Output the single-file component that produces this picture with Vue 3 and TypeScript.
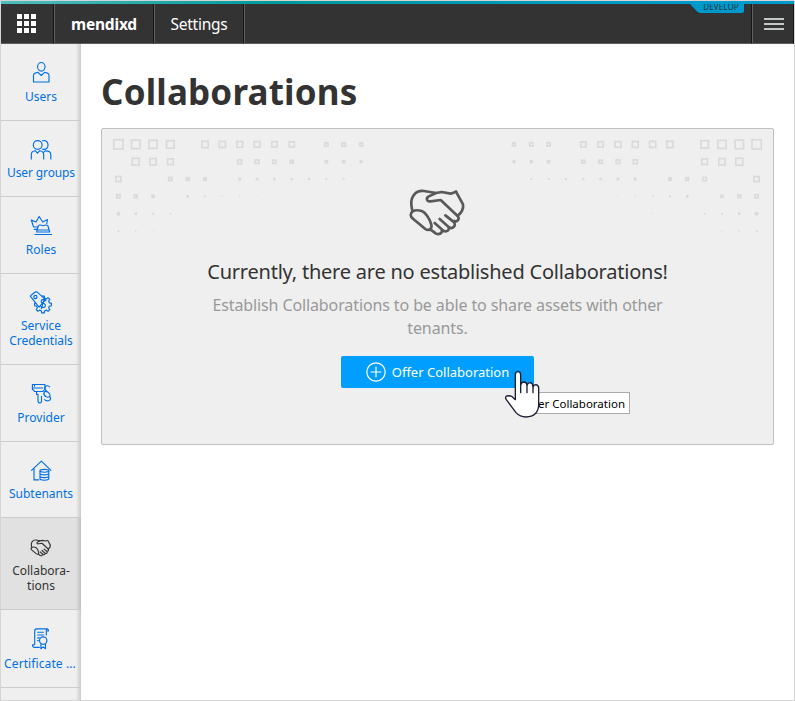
<script setup lang="ts">
interface NavItem {
  id: string
  lines: string[]
  height: number
}

const navItems: NavItem[] = [
  { id: 'users', lines: ['Users'], height: 77 },
  { id: 'groups', lines: ['User groups'], height: 76 },
  { id: 'roles', lines: ['Roles'], height: 77 },
  { id: 'credentials', lines: ['Service', 'Credentials'], height: 91 },
  { id: 'provider', lines: ['Provider'], height: 77 },
  { id: 'subtenants', lines: ['Subtenants'], height: 76 },
  { id: 'collaborations', lines: ['Collabora-', 'tions'], height: 92 },
  { id: 'certificate', lines: ['Certificate ...'], height: 78 },
]

const activeId = 'collaborations'

// Square sizes per row, keyed by column, counted from the outer edge inwards.
const patternRows: Record<number, number>[] = [
  { 0: 11, 1: 10.2, 2: 9.8, 3: 9.2, 5: 8, 6: 7.8, 7: 7.6, 8: 7.4, 9: 7, 10: 6.8, 12: 5, 13: 5, 14: 4.6 },
  { 1: 8.6, 2: 8, 3: 7.4, 7: 5.6, 8: 5.4, 9: 5, 10: 4.6, 12: 3.8, 13: 3.4, 14: 3.2 },
  { 0: 6.8, 3: 5, 4: 4.4, 5: 4, 7: 3, 8: 2.8, 9: 2.6, 10: 2.4, 11: 2.2, 12: 2, 13: 1.8 },
  { 0: 5, 1: 4.4, 2: 3.6, 4: 2.6, 5: 2, 6: 1.6, 7: 1.4, 8: 1 },
  { 0: 3.4, 1: 2.6, 2: 2, 3: 1.7, 6: 1 },
  { 0: 2, 1: 1.5, 2: 1 },
]

interface Square {
  x: number
  y: number
  s: number
  w: number
}

const squares: Square[] = patternRows.flatMap((row, r) =>
  Object.entries(row).flatMap(([c, size]) => {
    const cx = 17.4 + Number(c) * 17.33
    const cy = 16.4 + r * 17.33
    const w = Math.min(1.7, size / 2)
    const s = size - w
    return [cx, 673 - cx].map((x) => ({ x: x - s / 2, y: cy - s / 2, s, w }))
  }),
)

function gearPath(cx: number, cy: number, inner: number, outer: number, teeth: number): string {
  const points: string[] = []
  const step = (Math.PI * 2) / teeth
  for (let i = 0; i < teeth; i++) {
    for (const [offset, radius] of [[-0.29, inner], [-0.2, outer], [0.2, outer], [0.29, inner]]) {
      const a = (i + offset) * step
      points.push(`${(cx + Math.cos(a) * radius).toFixed(2)} ${(cy + Math.sin(a) * radius).toFixed(2)}`)
    }
  }
  return `M${points.join('L')}Z`
}

const gear = gearPath(14, 13.5, 6.6, 8.5, 8)

const handPaths = [
  'M138 54 L102 48 C76 45 62 66 64 90 L67 108',
  'M68 109 C60 115 60 124 69 131 L106 162 C116 169 127 162 124 149 C119 131 106 111 95 108 C85 105 75 105 68 109 Z',
  'M198 50 L182 56 L155 51 L138 54 L115 65 C107 71 111 81 122 79 L152 75 L202 122 C211 131 202 142 193 138',
  'M198 50 L219 88 C222 102 213 116 202 122',
  'M166 121 L190 140 C202 152 187 164 176 156',
  'M149 132 L175 155 C182 166 166 174 157 165',
  'M134 144 L155 163 C160 175 146 180 137 175 L121 163',
]
</script>

<template>
  <div class="page">
    <header class="topbar">
      <div class="cell apps">
        <svg width="19" height="20" viewBox="0 0 19 20" fill="#fff">
          <template v-for="r in 3" :key="r">
            <rect v-for="c in 3" :key="c" :x="(c - 1) * 7" :y="(r - 1) * 7" width="5" height="5" />
          </template>
        </svg>
      </div>
      <div class="cell brand">mendixd</div>
      <div class="cell section">Settings</div>
      <div class="filler"><span class="stage">DEVELOP</span></div>
      <div class="cell menu"><i></i><i></i><i></i></div>
    </header>

    <div class="body">
      <nav class="sidebar">
        <a
          v-for="item in navItems"
          :key="item.id"
          :class="['item', item.id, { active: item.id === activeId }]"
          :style="{ height: item.height + 'px' }"
        >
          <svg v-if="item.id === 'collaborations'" class="icon" viewBox="45 7 197 197">
            <path v-for="p in handPaths" :key="p" :d="p" stroke-width="9.5" />
          </svg>
          <svg v-else class="icon" viewBox="0 0 24 24">
            <template v-if="item.id === 'users'">
              <ellipse cx="12.3" cy="5.8" rx="3.7" ry="4.3" />
              <path d="M4.5 21V14.2Q4.5 12.6 6.2 12.1L9 11.3L12.3 14.5L15.6 11.3L18.4 12.1Q20 12.6 20 14.2V21Z" />
            </template>
            <template v-else-if="item.id === 'groups'">
              <circle cx="8.7" cy="7" r="4.4" />
              <path d="M13.2 2.9Q14.3 2.3 15.8 2.6Q19 3.4 19 7Q19 10.7 15.8 11.4Q14.4 11.6 13.2 11" />
              <path d="M2.3 21.5V16.5Q2.3 13 6.2 12.7L8.5 15.2L10.8 12.7Q14.5 13 14.7 16.5V21.5M14.3 14.6L16.2 12.9Q21.8 12.7 21.8 17V21.5" />
            </template>
            <template v-else-if="item.id === 'roles'">
              <path d="M4.5 12.8L2.3 6L7 8L10.2 2.5L13.7 8L18.5 5.5L17.7 10M4.3 13H9.3M4.8 15.3H8.3" />
              <path d="M7.6 18L9.2 12Q10 10.8 11.5 11L14 11.7L16.8 11Q18.3 10.8 19 12L20.7 18ZM5.5 20.5H23M8 16H20" />
            </template>
            <template v-else-if="item.id === 'credentials'">
              <path :d="gear" />
              <path class="tag" d="M1.3 5.2L2.3 4L6.6 .8L8 .9L16.5 8.6L10 16.2Z" />
              <circle cx="6.4" cy="6" r="1.6" />
              <path d="M17.3 10Q15 7.4 12.6 9Q11.2 11.2 14.2 12.2Q17.5 13.5 15.8 16Q13.5 17.3 11.4 15.2M15.6 6.8L12.2 18" />
            </template>
            <template v-else-if="item.id === 'provider'">
              <path d="M3.4 2.5H16V7.5Q14 8.5 14 9.5H5.4Q5.4 8.3 3.4 7.5ZM3.4 6H14M5.5 3V4.8M7.5 9.5V12.3H9V18.5Q9 21 11 21Q12.7 21 12.5 18V14" />
              <path d="M21 5.2Q18.5 2.5 16 5Q15 7.5 18 9.5Q21.6 12 20.8 14Q19.5 16.2 16.8 14.5Q14 12.6 15.2 10.2Q16.4 8.6 18.5 10M20.7 14.2Q22.7 17 20.2 18.5Q17.4 19.7 15.2 17.3" />
            </template>
            <template v-else-if="item.id === 'subtenants'">
              <path d="M2.2 11.7L12.4 2.2L22.2 11.7M5 9.5V20.8H10.2" />
              <ellipse cx="15.4" cy="11.8" rx="4.4" ry="1.4" />
              <path d="M11 11.8V19.8Q11 21.2 15.4 21.2T19.8 19.8V11.8M11 14.5Q11 15.9 15.4 15.9T19.8 14.5M11 17.2Q11 18.6 15.4 18.6T19.8 17.2" />
            </template>
            <template v-else>
              <path d="M5.7 17.8V4Q5.7 1.9 7.7 1.9H18.2Q17.3 2.6 17.3 4V8.5M18.2 1.9Q19.6 2 19.5 4H17.3M5.7 17.8H3.5Q3.4 20.4 5.5 20.4H10.8M8.2 5.2H14.8M8.2 8H14.8M8.2 10.8H10.8M8.2 13.6H9.8" />
              <circle cx="14.2" cy="13.6" r="3.7" />
              <path d="M11.9 16.5V21.7L14.2 19.9L16.5 21.7V16.5" />
            </template>
          </svg>
          <span class="label">
            <template v-for="(line, i) in item.lines" :key="line"><br v-if="i" />{{ line }}</template>
          </span>
        </a>
      </nav>

      <main class="content">
        <h1>Collaborations</h1>
        <section class="empty">
          <svg class="pattern" width="673" height="316" viewBox="0 0 673 316">
            <rect
              v-for="(q, i) in squares"
              :key="i"
              :x="q.x"
              :y="q.y"
              :width="q.s"
              :height="q.s"
              :stroke-width="q.w"
            />
          </svg>
          <svg class="hands" viewBox="57 39 171 147" width="57" height="49">
            <path v-for="p in handPaths" :key="p" :d="p" />
          </svg>
          <h2>Currently, there are no established Collaborations!</h2>
          <p>Establish Collaborations to be able to share assets with other<br />tenants.</p>
          <button class="offer" type="button">
            <svg width="20" height="20" viewBox="0 0 20 20">
              <circle cx="10" cy="10" r="9.2" />
              <path d="M10 4.7V15.3M4.7 10H15.3" />
            </svg>
            <span>Offer Collaboration</span>
          </button>
          <div class="tooltip">Offer Collaboration</div>
          <svg class="cursor" viewBox="522 74 108 144" width="36" height="48">
            <path
              d="M556 163V87Q557 79 564 79Q571 79 572 87V118Q575 110 582 110Q590 111 591 119Q594 112 601 112Q608 113 609 124Q612 118 618 118Q626 120 626 128V180Q624 214 588 215Q570 215 558 202L529 163Q524 155 530 152Q538 150 545 153Z"
            />
            <path d="M572 116V142M591 118V142M609 122V142" />
          </svg>
        </section>
      </main>
    </div>
  </div>
</template>

<style>
body {
  margin: 0;
  background: #fff;
}
</style>

<style scoped>
.page {
  box-sizing: border-box;
  width: 795px;
  height: 701px;
  border: 1px solid #d5d5d5;
  display: flex;
  flex-direction: column;
  overflow: hidden;
  background: #fff;
  font-family: 'Noto Sans', sans-serif;
  color: #333;
}

.topbar {
  flex: none;
  box-sizing: border-box;
  height: 43px;
  padding-top: 3px;
  display: flex;
  background:
    linear-gradient(90deg, #50bebe 0, #009999 35%, #0099cb 85%) top / 100% 3px no-repeat,
    #333;
  color: #fff;
}

.cell,
.filler {
  box-sizing: border-box;
  height: 40px;
  border-bottom: 1px solid #606060;
  display: flex;
  align-items: center;
  justify-content: center;
}

.cell {
  border-right: 1px solid #151515;
}

.cell + .cell,
.menu {
  border-left: 1px solid #606060;
}

.apps { width: 53px; padding-right: 2px; }
.brand { width: 100px; font-size: 15.5px; letter-spacing: -0.2px; font-weight: 700; padding-top: 1px; }
.section { width: 90px; font-size: 15.5px; letter-spacing: -0.25px; padding-top: 1px; }

.filler {
  flex: 1;
  border-left: 1px solid #606060;
  border-right: 1px solid #151515;
  justify-content: flex-end;
  align-items: flex-start;
}

.stage {
  box-sizing: border-box;
  width: 54px;
  height: 9px;
  margin-right: 7px;
  padding-left: 8px;
  background: #0099cb;
  clip-path: polygon(0 0, 100% 0, 100% 85%, 97% 100%, 19% 100%, 14% 88%);
  color: #263238;
  font-size: 8px;
  letter-spacing: 0.1px;
  line-height: 5px;
  text-align: center;
}

.menu {
  width: 42px;
  padding-left: 2px;
  flex-direction: column;
  gap: 3px;
}

.menu i {
  width: 20px;
  height: 2px;
  background: #c2c6c6;
}

.body {
  flex: 1;
  min-height: 0;
  display: flex;
}

.sidebar {
  flex: none;
  width: 80px;
  background: linear-gradient(90deg, transparent 75px, rgba(0, 0, 0, 0.16) 80px), #efefef;
}

.item {
  box-sizing: border-box;
  padding-top: 17px;
  border-bottom: 1px solid #ccc;
  display: flex;
  flex-direction: column;
  align-items: center;
  color: #006fe6;
}

.item.active {
  background: rgba(0, 0, 0, 0.055);
  color: #333;
}

.icon {
  flex: none;
  width: 24px;
  height: 24px;
  fill: none;
  stroke: currentColor;
  stroke-width: 1.15;
  stroke-linejoin: round;
}

.tag {
  fill: #efefef;
}

.label {
  margin-top: 4px;
  font-size: 12px;
  line-height: 15px;
  text-align: center;
  white-space: nowrap;
}

.groups .label,
.credentials .label,
.subtenants .label {
  margin-top: 3px;
}

.groups .label {
  letter-spacing: -0.12px;
}

.certificate .label {
  margin-top: 5px;
  margin-right: 2px;
  letter-spacing: 0.1px;
}

.content {
  flex: 1;
  padding: 24px 20px 0 20px;
}

h1 {
  margin: 0;
  height: 60px;
  font-size: 35px;
  line-height: 48px;
  font-weight: 700;
  letter-spacing: 0.18px;
}

.empty {
  position: relative;
  box-sizing: border-box;
  width: 673px;
  height: 317px;
  padding-top: 59px;
  border: 1px solid #bebebe;
  border-radius: 2px;
  background: #efefef;
  display: flex;
  flex-direction: column;
  align-items: center;
}

.pattern {
  position: absolute;
  left: -1px;
  top: -1px;
  fill: none;
  stroke: #dadada;
}

.hands {
  fill: none;
  stroke: #58595b;
  stroke-width: 8;
  stroke-linecap: round;
  stroke-linejoin: round;
}

h2 {
  margin: 21px 0 0;
  font-size: 20px;
  line-height: 28px;
  font-weight: 400;
  letter-spacing: -0.22px;
  white-space: nowrap;
}

p {
  margin: 8px 0 0;
  font-size: 16px;
  line-height: 23px;
  letter-spacing: -0.11px;
  color: #999;
  text-align: center;
  white-space: nowrap;
}

.offer {
  width: 193px;
  height: 32px;
  margin-top: 16px;
  padding: 0;
  border: 0;
  border-radius: 2px;
  background: #009fff;
  color: #fff;
  font: 13px 'Noto Sans', sans-serif;
  display: flex;
  align-items: center;
  justify-content: center;
  gap: 6px;
}

.offer svg {
  fill: none;
  stroke: #fff;
  stroke-width: 1.2;
}

.tooltip {
  position: absolute;
  left: 417px;
  top: 263px;
  box-sizing: border-box;
  width: 111px;
  height: 22px;
  padding-right: 4px;
  border: 1px solid #aaa;
  background: #fff;
  color: #000;
  font-size: 11.5px;
  line-height: 22px;
  text-align: right;
  white-space: nowrap;
}

.cursor {
  position: absolute;
  left: 402px;
  top: 241px;
  fill: #fff;
  stroke: #1c1f33;
  stroke-width: 4;
  stroke-linejoin: round;
  stroke-linecap: round;
}
</style>
